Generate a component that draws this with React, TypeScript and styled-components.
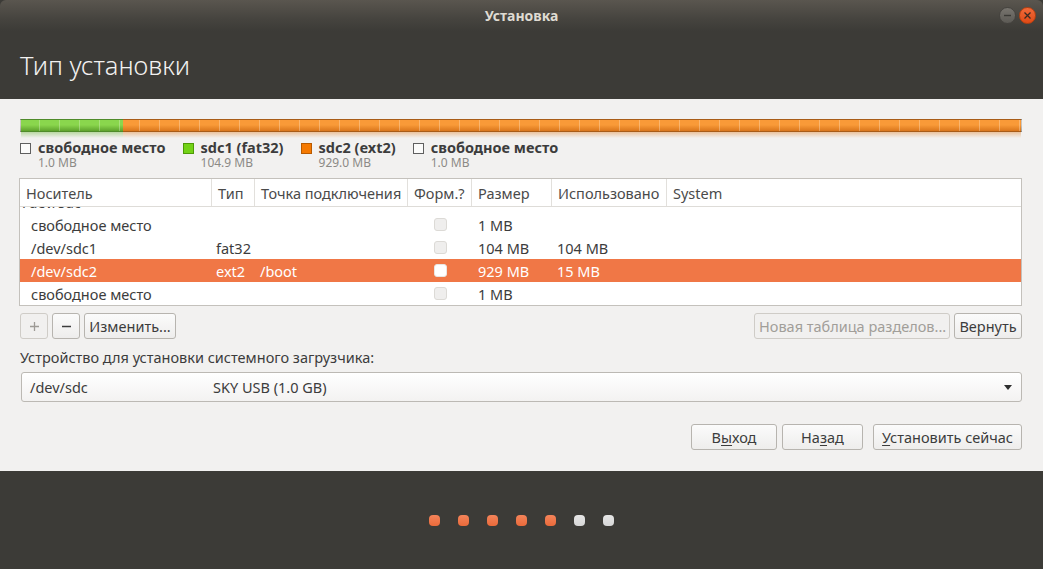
import React from 'react';
import styled, { createGlobalStyle } from 'styled-components';

const GlobalStyle = createGlobalStyle`
  html, body {
    margin: 0;
    padding: 0;
    background: #3c3b37;
  }
  body {
    font-family: "Noto Sans", "DejaVu Sans", sans-serif;
    font-size: 14.5px;
    color: #3c3c3c;
  }
  * {
    box-sizing: border-box;
  }
`;

const Window = styled.div`
  width: 1043px;
  height: 569px;
  display: flex;
  flex-direction: column;
  background: #3c3b37;
  overflow: hidden;
`;

const TitleBar = styled.div`
  height: 31px;
  display: grid;
  grid-template-columns: 1fr auto 1fr;
  align-items: center;
  background: linear-gradient(to bottom, #5a564f 0%, #46443f 60%, #3c3b37 100%);
  border-radius: 6px 6px 0 0;
`;

const WindowTitle = styled.div`
  grid-column: 2;
  font-size: 14px;
  font-weight: bold;
  color: #dfdbd2;
`;

const WindowControls = styled.div`
  grid-column: 3;
  justify-self: end;
  display: flex;
  gap: 3px;
  padding-right: 7px;
`;

const RoundButton = styled.div<{ $close?: boolean }>`
  width: 17px;
  height: 17px;
  border-radius: 50%;
  display: flex;
  align-items: center;
  justify-content: center;
  background: ${(p) =>
    p.$close
      ? 'linear-gradient(to bottom, #f26a3a, #df4a16)'
      : 'linear-gradient(to bottom, #77746e, #5c5a55)'};
  border: 1px solid ${(p) => (p.$close ? '#b9400f' : '#45433f')};
`;

const Header = styled.div`
  height: 68px;
  display: flex;
  align-items: center;
  padding-left: 20px;
`;

const PageTitle = styled.h1`
  margin: 0;
  font-size: 25.5px;
  font-weight: 300;
  color: #f2f1f0;
`;

const Body = styled.div`
  height: 372px;
  background: #f2f1f0;
  padding: 20px 21px 0 20px;
  display: flex;
  flex-direction: column;
`;

const PartitionBar = styled.div`
  display: flex;
  height: 19px;
`;

const Segment = styled.div<{ $width?: number }>`
  display: flex;
  flex-direction: column;
  ${(p) => (p.$width ? `width: ${p.$width}px;` : 'flex: 1;')}
`;

const Fill = styled.div<{ $top: string; $bottom: string; $edge: string; $offset: number }>`
  height: 13px;
  background-color: ${(p) => p.$top};
  background-image: linear-gradient(
      to right,
      transparent 19px,
      rgba(255, 255, 255, 0.28) 19px,
      rgba(255, 255, 255, 0.28) 20px
    ),
    linear-gradient(to bottom, ${(p) => p.$top} 0%, ${(p) => p.$top} 45%, ${(p) => p.$bottom} 100%);
  background-size: 20px 100%, 100% 100%;
  background-position: ${(p) => p.$offset}px 0, 0 0;
  border-top: 1px solid ${(p) => p.$edge};
  border-bottom: 1px solid ${(p) => p.$edge};
`;

const Reflection = styled.div<{ $color: string }>`
  height: 6px;
  background: linear-gradient(to bottom, ${(p) => p.$color}, rgba(242, 241, 240, 0));
  opacity: 0.45;
`;

const Legend = styled.div`
  display: flex;
  margin-top: 1px;
  gap: 17px;
`;

const LegendItem = styled.div`
  display: grid;
  grid-template-columns: 11px auto;
  column-gap: 7px;
  align-items: center;
`;

const Swatch = styled.span<{ $fill?: string; $edge?: string }>`
  width: 11px;
  height: 11px;
  margin-top: 1px;
  background: ${(p) => p.$fill || '#fbfbfa'};
  border: 1px solid ${(p) => p.$edge || '#5f5f5f'};
`;

const LegendLabel = styled.span`
  font-weight: bold;
  font-size: 14.5px;
  line-height: 17px;
  color: #3c3c3c;
`;

const LegendSize = styled.span`
  grid-column: 2;
  font-size: 12px;
  line-height: 14px;
  color: #8c8a86;
`;

const Table = styled.div`
  margin-top: 8px;
  margin-left: -1px;
  background: #ffffff;
  border: 1px solid #c4c1bc;
`;

const columns = '192px 43px 153px 64px 80px 115px 1fr';

const HeaderRow = styled.div`
  display: grid;
  grid-template-columns: ${columns};
  height: 28px;
  border-bottom: 1px solid #dedcd8;
`;

const HeaderCell = styled.div<{ $last?: boolean }>`
  display: flex;
  align-items: center;
  padding-left: 6px;
  color: #4a4a4a;
  border-right: ${(p) => (p.$last ? 'none' : '1px solid #e2e0dc')};
  white-space: nowrap;
  overflow: hidden;
`;

const Rows = styled.div`
  height: 98px;
  overflow: hidden;
`;

const Row = styled.div<{ $selected?: boolean; $partial?: boolean }>`
  display: grid;
  grid-template-columns: ${columns};
  height: 23px;
  align-items: center;
  background: ${(p) => (p.$selected ? '#f07746' : 'transparent')};
  color: ${(p) => (p.$selected ? '#ffffff' : '#3c3c3c')};
  margin-top: ${(p) => (p.$partial ? '-17px' : '0')};
`;

const Cell = styled.div<{ $indent?: number; $center?: boolean; $drop?: number }>`
  padding-left: ${(p) => p.$indent ?? 5}px;
  padding-top: ${(p) => p.$drop ?? 0}px;
  display: flex;
  justify-content: ${(p) => (p.$center ? 'center' : 'flex-start')};
  white-space: nowrap;
`;

const RowCheck = styled.span<{ $selected?: boolean }>`
  width: 13px;
  height: 13px;
  border-radius: 3px;
  background: ${(p) => (p.$selected ? '#ffffff' : '#efeeed')};
  border: 1px solid ${(p) => (p.$selected ? '#e8e6e3' : '#dcdad6')};
  margin-left: 1px;
`;

const ButtonRow = styled.div`
  display: flex;
  margin-top: 7px;
  gap: 4px;
`;

const Spacer = styled.div`
  flex: 1;
`;

const Button = styled.button<{ $width?: number }>`
  height: 26px;
  ${(p) => (p.$width ? `width: ${p.$width}px;` : '')}
  padding: 0 4px;
  font-family: inherit;
  font-size: 14.5px;
  color: #3c3c3c;
  background: linear-gradient(to bottom, #fbfbfb, #eeedec);
  border: 1px solid #b7b4af;
  border-radius: 3px;
  white-space: nowrap;
  &:disabled {
    color: #a19e99;
    background: #f1f0ef;
    border-color: #cfccc7;
  }
`;

const IconButton = styled(Button)`
  width: 28px;
  padding: 0;
  display: flex;
  align-items: center;
  justify-content: center;
`;

const FieldLabel = styled.div`
  margin-top: 9px;
  line-height: 18px;
  color: #3c3c3c;
`;

const Combo = styled.div`
  margin-top: 6px;
  margin-left: 1px;
  height: 30px;
  display: grid;
  grid-template-columns: 183px 1fr auto;
  align-items: center;
  padding: 0 8px;
  background: linear-gradient(to bottom, #ffffff, #f3f2f1);
  border: 1px solid #bcb9b4;
  border-radius: 3px;
`;

const Arrow = styled.span`
  width: 0;
  height: 0;
  border-left: 4px solid transparent;
  border-right: 4px solid transparent;
  border-top: 5px solid #2e2e2e;
  margin-right: 1px;
`;

const Actions = styled.div`
  display: flex;
  justify-content: flex-end;
  margin-top: 22px;
  gap: 5px;
`;

const GroupBreak = styled.span`
  width: 0;
`;

const Mnemonic = styled.u`
  text-decoration-thickness: 1px;
  text-underline-offset: 2px;
`;

const Footer = styled.div`
  flex: 1;
  display: flex;
  align-items: center;
  justify-content: center;
  gap: 18px;
`;

const Dot = styled.span<{ $done?: boolean }>`
  width: 11px;
  height: 11px;
  border-radius: 4px;
  background: ${(p) =>
    p.$done
      ? 'linear-gradient(to bottom, #f4845a, #ea6a3a)'
      : 'linear-gradient(to bottom, #e6e6e6, #d6d6d6)'};
`;

const headers = ['Носитель', 'Тип', 'Точка подключения', 'Форм.?', 'Размер', 'Использовано', 'System'];

const rows = [
  { name: 'свободное место', type: '', mount: '', size: '1 MB', used: '' },
  { name: '/dev/sdc1', type: 'fat32', mount: '', size: '104 MB', used: '104 MB' },
  { name: '/dev/sdc2', type: 'ext2', mount: '/boot', size: '929 MB', used: '15 MB', selected: true },
  { name: 'свободное место', type: '', mount: '', size: '1 MB', used: '' },
];

const App: React.FC = () => {
  return (
    <Window>
      <GlobalStyle />
      <TitleBar>
        <WindowTitle>Установка</WindowTitle>
        <WindowControls>
          <RoundButton>
            <svg width="9" height="9" viewBox="0 0 9 9">
              <line x1="1" y1="4.5" x2="8" y2="4.5" stroke="#3a3935" strokeWidth="1.4" />
            </svg>
          </RoundButton>
          <RoundButton $close>
            <svg width="9" height="9" viewBox="0 0 9 9">
              <path d="M1.5 1.5 L7.5 7.5 M7.5 1.5 L1.5 7.5" stroke="#3a2a22" strokeWidth="1.3" />
            </svg>
          </RoundButton>
        </WindowControls>
      </TitleBar>
      <Header>
        <PageTitle>Тип установки</PageTitle>
      </Header>
      <Body>
        <PartitionBar>
          <Segment $width={1}>
            <Fill $top="#c9c6c1" $bottom="#a9a6a1" $edge="#8d8a85" $offset={0} />
          </Segment>
          <Segment $width={102}>
            <Fill $top="#8ad64d" $bottom="#5fa22d" $edge="#4f8b2a" $offset={-1} />
            <Reflection $color="#74b843" />
          </Segment>
          <Segment>
            <Fill $top="#f99a38" $bottom="#d9761c" $edge="#a85c18" $offset={-3} />
            <Reflection $color="#e18a3a" />
          </Segment>
          <Segment $width={1}>
            <Fill $top="#c9c6c1" $bottom="#a9a6a1" $edge="#8d8a85" $offset={0} />
          </Segment>
        </PartitionBar>

        <Legend>
          <LegendItem>
            <Swatch />
            <LegendLabel>свободное место</LegendLabel>
            <LegendSize>1.0 MB</LegendSize>
          </LegendItem>
          <LegendItem>
            <Swatch $fill="#73d216" $edge="#4e9a06" />
            <LegendLabel>sdc1 (fat32)</LegendLabel>
            <LegendSize>104.9 MB</LegendSize>
          </LegendItem>
          <LegendItem>
            <Swatch $fill="#f57900" $edge="#b85a00" />
            <LegendLabel>sdc2 (ext2)</LegendLabel>
            <LegendSize>929.0 MB</LegendSize>
          </LegendItem>
          <LegendItem>
            <Swatch />
            <LegendLabel>свободное место</LegendLabel>
            <LegendSize>1.0 MB</LegendSize>
          </LegendItem>
        </Legend>

        <Table>
          <HeaderRow>
            {headers.map((h, i) => (
              <HeaderCell key={h} $last={i === headers.length - 1}>
                {h}
              </HeaderCell>
            ))}
          </HeaderRow>
          <Rows>
            <Row $partial>
              <Cell $indent={3} $drop={1}>
                /dev/sdc
              </Cell>
            </Row>
            {rows.map((r, i) => (
              <Row key={i} $selected={r.selected}>
                <Cell $indent={11}>{r.name}</Cell>
                <Cell $indent={4}>{r.type}</Cell>
                <Cell $indent={5}>{r.mount}</Cell>
                <Cell $indent={0} $center>
                  <RowCheck $selected={r.selected} />
                </Cell>
                <Cell $indent={6}>{r.size}</Cell>
                <Cell $indent={5}>{r.used}</Cell>
                <Cell />
              </Row>
            ))}
          </Rows>
        </Table>

        <ButtonRow>
          <IconButton disabled>
            <svg width="11" height="11" viewBox="0 0 11 11">
              <path d="M5.5 1 V10 M1 5.5 H10" stroke="#9d9a95" strokeWidth="1.3" />
            </svg>
          </IconButton>
          <IconButton $width={26}>
            <svg width="11" height="11" viewBox="0 0 11 11">
              <path d="M1 5.5 H10" stroke="#3c3c3c" strokeWidth="1.5" />
            </svg>
          </IconButton>
          <Button $width={92}>Изменить...</Button>
          <Spacer />
          <Button $width={196} disabled>
            Новая таблица разделов...
          </Button>
          <Button $width={68}>Вернуть</Button>
        </ButtonRow>

        <FieldLabel>Устройство для установки системного загрузчика:</FieldLabel>
        <Combo>
          <span>/dev/sdc</span>
          <span>SKY USB (1.0 GB)</span>
          <Arrow />
        </Combo>

        <Actions>
          <Button $width={86}>
            В<Mnemonic>ы</Mnemonic>ход
          </Button>
          <Button $width={81}>
            На<Mnemonic>з</Mnemonic>ад
          </Button>
          <GroupBreak />
          <Button $width={149}>
            <Mnemonic>У</Mnemonic>становить сейчас
          </Button>
        </Actions>
      </Body>
      <Footer>
        {[true, true, true, true, true, false, false].map((done, i) => (
          <Dot key={i} $done={done} />
        ))}
      </Footer>
    </Window>
  );
};

export default App;
